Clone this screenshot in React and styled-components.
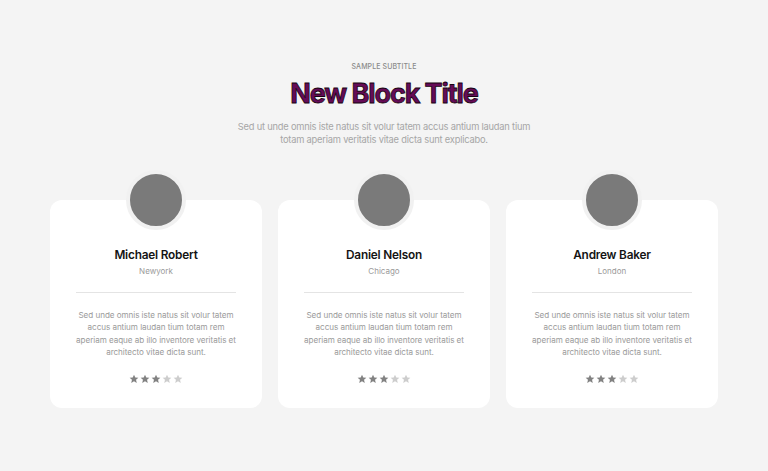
import React from "react";
import styled, { createGlobalStyle } from "styled-components";

const Global = createGlobalStyle`
  html, body { margin: 0; padding: 0; background: #f4f4f4; }
  body { font-family: Inter, "Noto Sans", sans-serif; }
`;

const Page = styled.div`
  width: 768px;
  height: 471px;
  box-sizing: border-box;
  padding-top: 62px;
  display: flex;
  flex-direction: column;
  align-items: center;
  background: #f4f4f4;
`;

const Subtitle = styled.div`
  font-size: 7px;
  line-height: 9px;
  color: #8a8a8a;
  letter-spacing: 0.1px;
  text-transform: uppercase;
  font-weight: 500;
`;

const Title = styled.h1`
  margin: 5px 0 0;
  font-size: 27px;
  line-height: 36px;
  font-weight: 700;
  letter-spacing: -1.1px;
  color: #650b57;
  -webkit-text-stroke: 0.8px #16040f;
`;

const Lead = styled.p`
  margin: 8px 0 0;
  width: 298px;
  text-align: center;
  font-size: 9.3px;
  line-height: 13px;
  color: #a6a6a6;
  letter-spacing: -0.2px;
`;

const Cards = styled.div`
  margin-top: 24px;
  display: grid;
  grid-template-columns: repeat(3, 212px);
  gap: 16px;
`;

const CardWrap = styled.div`
  display: flex;
  flex-direction: column;
  align-items: center;
`;

const Avatar = styled.div`
  width: 52px;
  height: 52px;
  border-radius: 50%;
  background: #7a7a7a;
  border: 4px solid #f1f1f1;
  margin-bottom: -30px;
  position: relative;
  z-index: 1;
`;

const Card = styled.div`
  width: 100%;
  height: 208px;
  box-sizing: border-box;
  background: #ffffff;
  border-radius: 12px;
  padding-top: 47px;
  display: flex;
  flex-direction: column;
  align-items: center;
`;

const Name = styled.div`
  font-size: 11.8px;
  line-height: 16px;
  font-weight: 600;
  color: #141414;
  letter-spacing: -0.2px;
`;

const City = styled.div`
  margin-top: 3px;
  font-size: 8px;
  line-height: 10px;
  color: #9a9a9a;
`;

const Divider = styled.div`
  margin-top: 16px;
  width: 160px;
  height: 1px;
  background: #e4e4e4;
`;

const Text = styled.p`
  margin: 16px 0 0;
  width: 163px;
  text-align: center;
  font-size: 8.1px;
  line-height: 12.4px;
  color: #9a9a9a;
  letter-spacing: -0.05px;
`;

const Stars = styled.div`
  margin-top: 15px;
  display: flex;
  gap: 1px;
`;

const StarIcon = ({ on }) => (
  <svg width="10" height="10" viewBox="0 0 24 24">
    <path
      fill={on ? "#828282" : "#cdcdcd"}
      d="M12 1.5l3.1 7 7.4.6-5.6 4.9 1.7 7.3L12 17.4l-6.6 3.9 1.7-7.3L1.5 9.1l7.4-.6z"
    />
  </svg>
);

const people = [
  { name: "Michael Robert", city: "Newyork" },
  { name: "Daniel Nelson", city: "Chicago" },
  { name: "Andrew Baker", city: "London" },
];

const body =
  "Sed unde omnis iste natus sit volur tatem accus antium laudan tium totam rem aperiam eaque ab illo inventore veritatis et architecto vitae dicta sunt.";

export default function App() {
  return (
    <>
      <Global />
      <Page>
        <Subtitle>Sample Subtitle</Subtitle>
        <Title>New Block Title</Title>
        <Lead>
          Sed ut unde omnis iste natus sit volur tatem accus antium laudan tium
          totam aperiam veritatis vitae dicta sunt explicabo.
        </Lead>
        <Cards>
          {people.map((p) => (
            <CardWrap key={p.name}>
              <Avatar />
              <Card>
                <Name>{p.name}</Name>
                <City>{p.city}</City>
                <Divider />
                <Text>{body}</Text>
                <Stars>
                  {[0, 1, 2, 3, 4].map((i) => (
                    <StarIcon key={i} on={i < 3} />
                  ))}
                </Stars>
              </Card>
            </CardWrap>
          ))}
        </Cards>
      </Page>
    </>
  );
}
